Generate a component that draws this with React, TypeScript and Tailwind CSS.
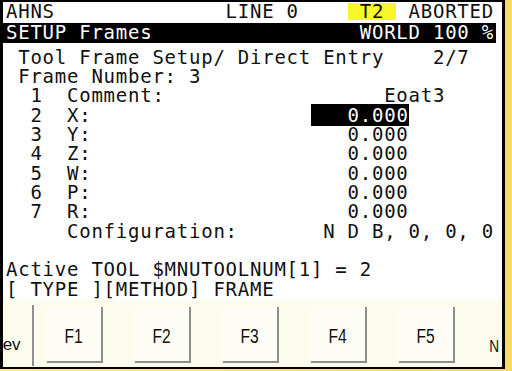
import React from 'react';

const mono = "font-['DejaVu_Sans_Mono',monospace] text-[19px] tracking-[0.76px] whitespace-pre text-[#111]";
const keyFont = "font-['Liberation_Sans',Arial,sans-serif] text-[#111]";

const Row = ({ children }: { children?: React.ReactNode }) => (
  <div className="h-[19.33px] leading-[19.33px] pl-[3px]">{children}</div>
);

const FKey = ({ label }: { label: string }) => (
  <div className="w-[56px] h-[56px] mt-[8px] border-r-2 border-b-2 border-[#8e8e8e] flex items-center justify-center pt-[4px] bg-[#fdfdf6]">
    <span className={`${keyFont} inline-block text-[20px] scale-x-[0.78]`}>{label}</span>
  </div>
);

export default function App() {
  return (
    <div className="w-[512px] h-[371px] bg-linear-to-r from-[#fbe89a] to-[#f4da6a] overflow-hidden">
      <div className="w-[505px] h-[369px] border-t-2 border-b-2 border-l-[3px] border-r-[3px] border-black bg-white flex flex-col">
        <div className={mono}>
          {/* status line */}
          <div className="h-[21px] leading-[19.33px] pl-[3px]">
            {'AHNS              LINE 0    '}
            <span className="inline-block align-top mt-[1px] h-[17px] leading-[17px] bg-[#f7f72a]">{' T2 '}</span>
            {' ABORTED'}
          </div>
          <div className="h-[20px] leading-[19.33px] pl-[3px] mr-[6px] bg-black text-white">
            {'SETUP Frames                 WORLD 100 %'}
          </div>

          <div className="pt-[4.6px]">
            <Row>{' Tool Frame Setup/ Direct Entry    2/7  '}</Row>
            <Row>{' Frame Number: 3'}</Row>
            <Row>{'  1  Comment:                  Eoat3    '}</Row>
            <Row>
              {'  2  X:                  '}
              <span className="bg-black text-white">{'   0.000'}</span>
            </Row>
            <Row>{'  3  Y:                     0.000'}</Row>
            <Row>{'  4  Z:                     0.000'}</Row>
            <Row>{'  5  W:                     0.000'}</Row>
            <Row>{'  6  P:                     0.000'}</Row>
            <Row>{'  7  R:                     0.000'}</Row>
            <Row>{'     Configuration:       N D B, 0, 0, 0'}</Row>
            <Row />
            <Row>{'Active TOOL $MNUTOOLNUM[1] = 2'}</Row>
            <Row>{'[ TYPE ][METHOD] FRAME'}</Row>
          </div>
        </div>

        {/* function keys */}
        <div className="flex-1 flex items-start bg-[#fbfbee]">
          <div className="w-[31px] h-[61px] mt-[6px] border-r-2 border-[#8e8e8e] overflow-hidden flex items-end pb-[13px]">
            <span className={`${keyFont} text-[17px] leading-[17px] -ml-[6px]`}>rev</span>
          </div>
          <div className="ml-[13px] flex gap-[32px]">
            <FKey label="F1" />
            <FKey label="F2" />
            <FKey label="F3" />
            <FKey label="F4" />
            <FKey label="F5" />
          </div>
          <div className="ml-[33px] mt-[35px]">
            <span className={`${keyFont} inline-block text-[17px] scale-x-[0.8]`}>N</span>
          </div>
        </div>
      </div>
    </div>
  );
}
